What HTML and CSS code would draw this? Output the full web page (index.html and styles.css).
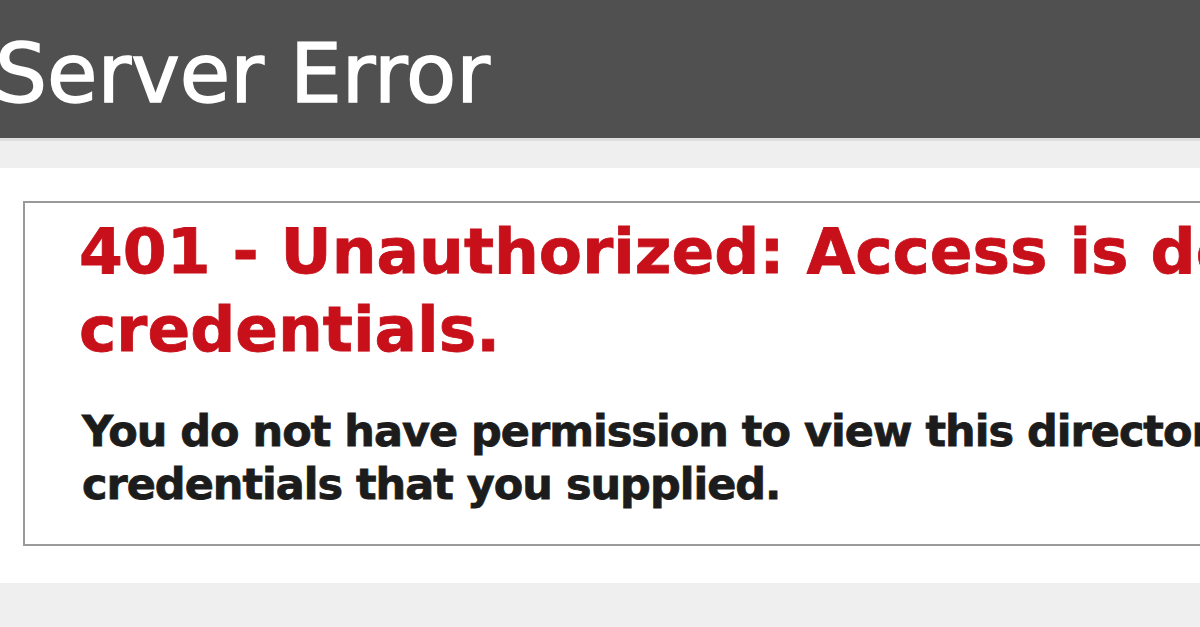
FILE: index.html
```html
<!DOCTYPE html>
<html lang="en">
<head>
<meta charset="utf-8">
<title>401 - Unauthorized</title>
<link rel="stylesheet" href="styles.css">
</head>
<body>
<div class="header"><h1>Server Error</h1></div>
<div class="content">
  <div class="box">
    <h2>401 - Unauthorized: Access is denied due to invalid<br>credentials.</h2>
    <p>You do not have permission to view this directory or page using the<br>credentials that you supplied.</p>
  </div>
</div>
</body>
</html>
```
FILE: styles.css
```css
html, body {
  margin: 0;
  padding: 0;
  height: 100%;
}
body {
  background: #efefef;
  font-family: "DejaVu Sans", Verdana, sans-serif;
  overflow: hidden;
}
.header {
  background: #505050;
  height: 138px;
  border-bottom: 3px solid #dedede;
}
.header h1 {
  margin: 0 0 0 -5px;
  padding-top: 33px;
  font-size: 82px;
  line-height: 82px;
  font-weight: normal;
  color: #ffffff;
  -webkit-text-stroke: 1.5px #ffffff;
  white-space: nowrap;
}
.content {
  background: #ffffff;
  margin-top: 27px;
  padding: 33px 0 37px 23px;
}
.box {
  border: 2px solid #9a9a9a;
  border-right: none;
  width: 2000px;
  padding: 10px 0 33px 54px;
}
.box h2 {
  margin: 0;
  color: #c8101a;
  font-size: 63px;
  line-height: 78px;
  font-weight: bold;
  -webkit-text-stroke: 0.8px #c8101a;
  white-space: nowrap;
}
.box p {
  margin: 36px 0 0 0;
  padding-left: 3px;
  color: #1c1c1c;
  font-size: 43px;
  line-height: 53px;
  letter-spacing: -1px;
  font-weight: bold;
  -webkit-text-stroke: 0.8px #1c1c1c;
  white-space: nowrap;
}
```
